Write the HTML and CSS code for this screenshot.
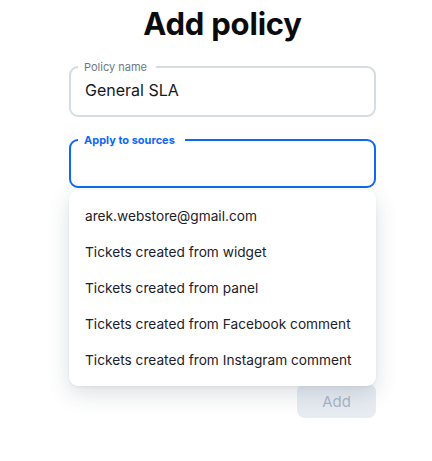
FILE: index.html
```html
<!DOCTYPE html>
<html>
<head>
<meta charset="utf-8">
<link rel="stylesheet" href="styles.css">
</head>
<body>
<div class="page">
  <h1 class="title">Add policy</h1>
  <form class="form">
    <fieldset class="field">
      <legend class="field-label">Policy name</legend>
      <div class="field-value">General SLA</div>
    </fieldset>
    <div class="select-wrap">
      <fieldset class="field field-active">
        <legend class="field-label">Apply to sources</legend>
        <div class="field-value"></div>
      </fieldset>
      <ul class="menu">
        <li class="menu-item">arek.webstore@gmail.com</li>
        <li class="menu-item">Tickets created from widget</li>
        <li class="menu-item">Tickets created from panel</li>
        <li class="menu-item">Tickets created from Facebook comment</li>
        <li class="menu-item">Tickets created from Instagram comment</li>
      </ul>
    </div>
    <div class="actions">
      <button type="button" class="btn-add">Add</button>
    </div>
  </form>
</div>
</body>
</html>
```
FILE: styles.css
```css
* { box-sizing: border-box; }
html, body { margin: 0; padding: 0; background: #fff; }
body { font-family: Inter, "Noto Sans", sans-serif; color: #1b1e25; }
.page { padding: 0 56px 0 69px; }
.title {
  margin: 0;
  padding-top: 5px;
  text-align: center;
  font-size: 31px;
  line-height: 38px;
  font-weight: 700;
  color: #0b0b0d;
  letter-spacing: -0.2px;
}
.form { width: 307px; margin-top: 17px; display: flex; flex-direction: column; }
.field {
  margin: 0;
  padding: 0 14px 0 14px;
  border: 2px solid #d6dce4;
  border-radius: 9px;
  height: 57px;
  min-width: 0;
}
.field-label {
  padding: 0 9px 0 6px;
  margin-left: -7px;
  font-size: 11px;
  line-height: 14px;
  color: #6c778a;
}
.field-value {
  font-size: 16px;
  line-height: 20px;
  padding-top: 6px;
  color: #15181e;
}
.select-wrap { position: relative; margin-top: 16px; }
.field-active { border-color: #0d68f4; height: 55px; }
.field-active .field-label { color: #0d68f4; font-weight: 700; padding-right: 10px; }
.menu {
  position: absolute;
  top: 57px;
  left: 0;
  right: 0;
  margin: 0;
  list-style: none;
  padding: 8px 0 8px;
  background: #fff;
  border-radius: 9px;
  box-shadow: 0 8px 22px rgba(40, 55, 80, 0.16), 0 1px 3px rgba(40, 55, 80, 0.06);
  z-index: 2;
}
.menu-item {
  height: 36px;
  line-height: 36px;
  padding: 0 16px;
  font-size: 13.7px;
  color: #1d2028;
}
.actions { display: flex; justify-content: flex-end; margin-top: 196px; }
.btn-add {
  width: 79px;
  height: 34px;
  border: none;
  border-radius: 8px;
  background: #e7ecf2;
  color: #aab6c7;
  font-family: inherit;
  font-size: 15px;
}
```
